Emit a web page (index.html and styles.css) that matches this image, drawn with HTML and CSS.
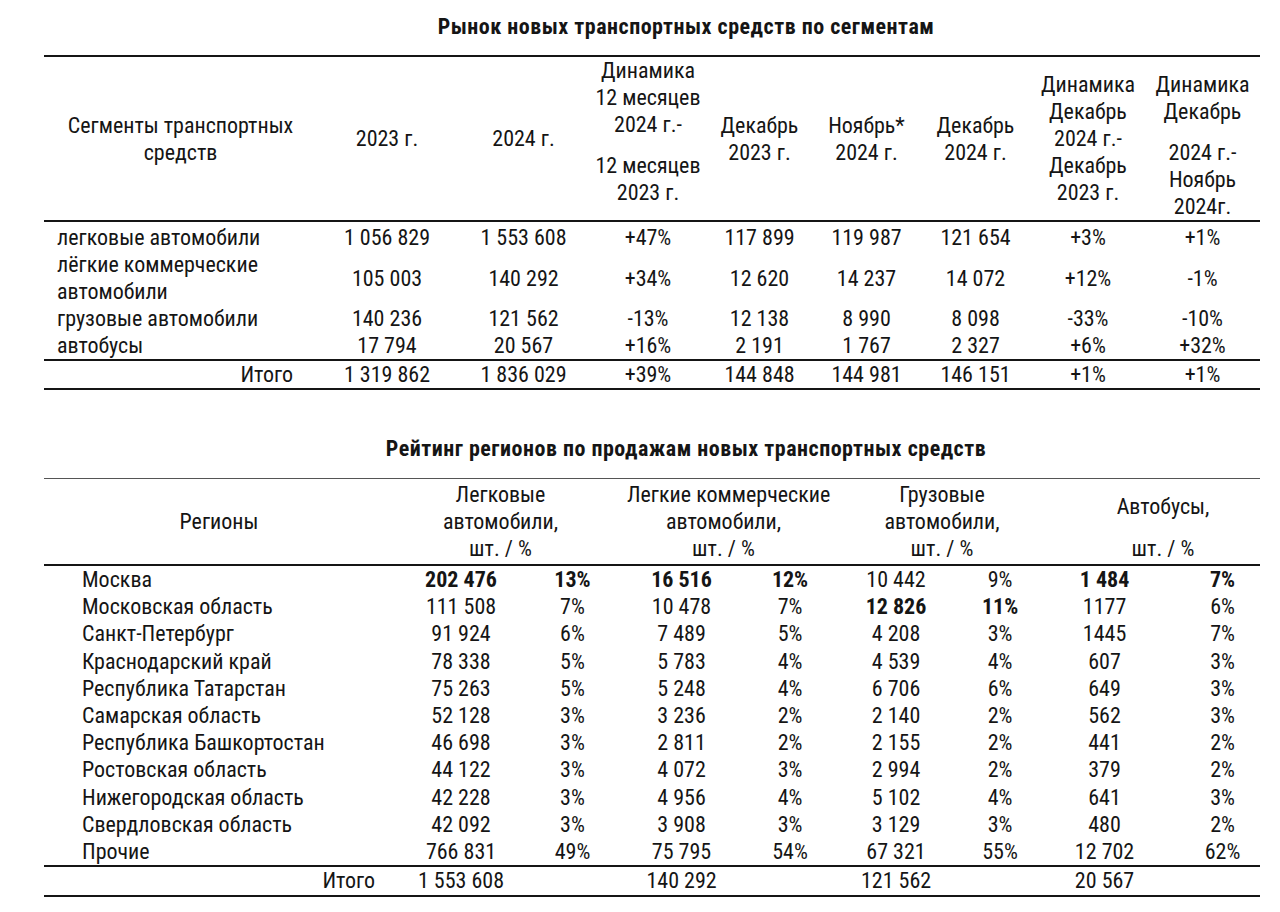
FILE: index.html
```html
<!DOCTYPE html>
<html lang="ru">
<head>
  <meta charset="UTF-8">
  <title>Рынок новых транспортных средств</title>
  <link rel="stylesheet" href="styles.css">
</head>
<body>
  <h2 class="title">Рынок новых транспортных средств по сегментам</h2>
  <table class="market">
    <colgroup>
      <col style="width:273px"><col style="width:140px"><col style="width:133px"><col style="width:116px">
      <col style="width:107px"><col style="width:107px"><col style="width:111px"><col style="width:114px"><col>
    </colgroup>
    <thead>
      <tr>
        <th>Сегменты транспортных<br>средств</th>
        <th>2023 г.</th>
        <th>2024 г.</th>
        <th class="dyn-year">Динамика<br>12 месяцев<br>2024 г.-<div class="gap">12 месяцев<br>2023 г.</div></th>
        <th>Декабрь<br>2023 г.</th>
        <th>Ноябрь*<br>2024 г.</th>
        <th>Декабрь<br>2024 г.</th>
        <th class="dyn-dec">Динамика<br>Декабрь<br>2024 г.-<br>Декабрь<br>2023 г.</th>
        <th class="dyn-nov">Динамика<br>Декабрь<div class="gap">2024 г.-<br>Ноябрь<br>2024г.</div></th>
      </tr>
    </thead>
    <tbody>
      <tr class="first">
        <td class="label">легковые автомобили</td>
        <td>1 056 829</td><td>1 553 608</td><td>+47%</td><td>117 899</td><td>119 987</td><td>121 654</td><td>+3%</td><td>+1%</td>
      </tr>
      <tr>
        <td class="label">лёгкие коммерческие<br>автомобили</td>
        <td>105 003</td><td>140 292</td><td>+34%</td><td>12 620</td><td>14 237</td><td>14 072</td><td>+12%</td><td>-1%</td>
      </tr>
      <tr>
        <td class="label">грузовые автомобили</td>
        <td>140 236</td><td>121 562</td><td>-13%</td><td>12 138</td><td>8 990</td><td>8 098</td><td>-33%</td><td>-10%</td>
      </tr>
      <tr>
        <td class="label">автобусы</td>
        <td>17 794</td><td>20 567</td><td>+16%</td><td>2 191</td><td>1 767</td><td>2 327</td><td>+6%</td><td>+32%</td>
      </tr>
    </tbody>
    <tfoot>
      <tr>
        <td class="total">Итого</td>
        <td>1 319 862</td><td>1 836 029</td><td>+39%</td><td>144 848</td><td>144 981</td><td>146 151</td><td>+1%</td><td>+1%</td>
      </tr>
    </tfoot>
  </table>

  <h2 class="title second">Рейтинг регионов по продажам новых транспортных средств</h2>
  <table class="regions">
    <colgroup>
      <col style="width:360px"><col style="width:114px"><col style="width:109px"><col style="width:109px">
      <col style="width:108px"><col style="width:104px"><col style="width:104px"><col style="width:105px"><col>
    </colgroup>
    <thead>
      <tr>
        <th class="region-head">Регионы</th>
        <th colspan="2" class="group g1">Легковые<br>автомобили,<br>шт. / %</th>
        <th colspan="2" class="group g2">Легкие коммерческие<br>автомобили,<br>шт. / %</th>
        <th colspan="2" class="group g3">Грузовые<br>автомобили,<br>шт. / %</th>
        <th colspan="2" class="group g4">Автобусы,<div class="gap">шт. / %</div></th>
      </tr>
    </thead>
    <tbody>
      <tr><td class="label">Москва</td><td><b>202 476</b></td><td><b>13%</b></td><td><b>16 516</b></td><td><b>12%</b></td><td>10 442</td><td>9%</td><td><b>1 484</b></td><td class="last"><b>7%</b></td></tr>
      <tr><td class="label">Московская область</td><td>111 508</td><td>7%</td><td>10 478</td><td>7%</td><td><b>12 826</b></td><td><b>11%</b></td><td>1177</td><td class="last">6%</td></tr>
      <tr><td class="label">Санкт-Петербург</td><td>91 924</td><td>6%</td><td>7 489</td><td>5%</td><td>4 208</td><td>3%</td><td>1445</td><td class="last">7%</td></tr>
      <tr><td class="label">Краснодарский край</td><td>78 338</td><td>5%</td><td>5 783</td><td>4%</td><td>4 539</td><td>4%</td><td>607</td><td class="last">3%</td></tr>
      <tr><td class="label">Республика Татарстан</td><td>75 263</td><td>5%</td><td>5 248</td><td>4%</td><td>6 706</td><td>6%</td><td>649</td><td class="last">3%</td></tr>
      <tr><td class="label">Самарская область</td><td>52 128</td><td>3%</td><td>3 236</td><td>2%</td><td>2 140</td><td>2%</td><td>562</td><td class="last">3%</td></tr>
      <tr><td class="label">Республика Башкортостан</td><td>46 698</td><td>3%</td><td>2 811</td><td>2%</td><td>2 155</td><td>2%</td><td>441</td><td class="last">2%</td></tr>
      <tr><td class="label">Ростовская область</td><td>44 122</td><td>3%</td><td>4 072</td><td>3%</td><td>2 994</td><td>2%</td><td>379</td><td class="last">2%</td></tr>
      <tr><td class="label">Нижегородская область</td><td>42 228</td><td>3%</td><td>4 956</td><td>4%</td><td>5 102</td><td>4%</td><td>641</td><td class="last">3%</td></tr>
      <tr><td class="label">Свердловская область</td><td>42 092</td><td>3%</td><td>3 908</td><td>3%</td><td>3 129</td><td>3%</td><td>480</td><td class="last">2%</td></tr>
      <tr><td class="label">Прочие</td><td>766 831</td><td>49%</td><td>75 795</td><td>54%</td><td>67 321</td><td>55%</td><td>12 702</td><td class="last">62%</td></tr>
    </tbody>
    <tfoot>
      <tr><td class="total">Итого</td><td>1 553 608</td><td></td><td>140 292</td><td></td><td>121 562</td><td></td><td>20 567</td><td></td></tr>
    </tfoot>
  </table>
</body>
</html>
```

FILE: styles.css
```css
body {
  margin: 0;
  padding: 2px 20px 0 44px;
  background-color: #fff;
  color: #151515;
  font-family: "Roboto Condensed", "Liberation Sans", Arial, sans-serif;
  font-size: 22px;
  line-height: 27px;
}
.title {
  margin: 0;
  padding: 11px 0 0 68px;
  height: 42px;
  font-size: 22px;
  font-weight: bold;
  letter-spacing: 0.5px;
  text-align: center;
  line-height: 27px;
}
.title.second {
  padding-top: 45px;
  height: 43px;
}
table {
  width: 1216px;
  border-collapse: collapse;
  table-layout: fixed;
}
th {
  font-weight: normal;
  padding: 0;
  text-align: center;
  vertical-align: middle;
  white-space: nowrap;
}
td {
  padding: 0;
  text-align: center;
  vertical-align: middle;
  white-space: nowrap;
}
.gap {
  margin-top: 14px;
}

/* market table */
.market thead tr {
  border-top: 2px solid #151515;
  border-bottom: 2px solid #151515;
  height: 165px;
}
.market .dyn-year {
  padding-bottom: 14px;
}
.market .dyn-nov {
  vertical-align: bottom;
}
.market .label {
  text-align: left;
  padding-left: 13px;
}
.market tbody .first td {
  padding-top: 2px;
}
.market tfoot tr {
  border-top: 2px solid #151515;
  border-bottom: 2px solid #151515;
}
.market .total {
  text-align: right;
  padding-right: 24px;
}

/* regions table */
.regions thead tr {
  border-top: 1.5px solid #555;
  border-bottom: 2px solid #151515;
}
.regions thead th {
  padding: 2px 0;
}
.regions .region-head {
  padding-right: 10px;
}
.regions .g1 { padding-right: 30px; }
.regions .g2 { padding-right: 24px; }
.regions .g3 { padding-right: 12px; }
.regions .g4 {
  padding-left: 14px;
  vertical-align: bottom;
}
.regions .g4 .gap {
  margin-top: 15px;
}
.regions tbody td {
  line-height: 27.2px;
}
.regions .label {
  text-align: left;
  padding-left: 38px;
}
.regions .last {
  padding-left: 28px;
}
.regions tfoot tr {
  border-top: 2px solid #151515;
  border-bottom: 2px solid #151515;
}
.regions tfoot td {
  padding: 0 0 1px;
}
.regions .total {
  text-align: right;
  padding-right: 29px;
}
b {
  font-weight: bold;
}
```
